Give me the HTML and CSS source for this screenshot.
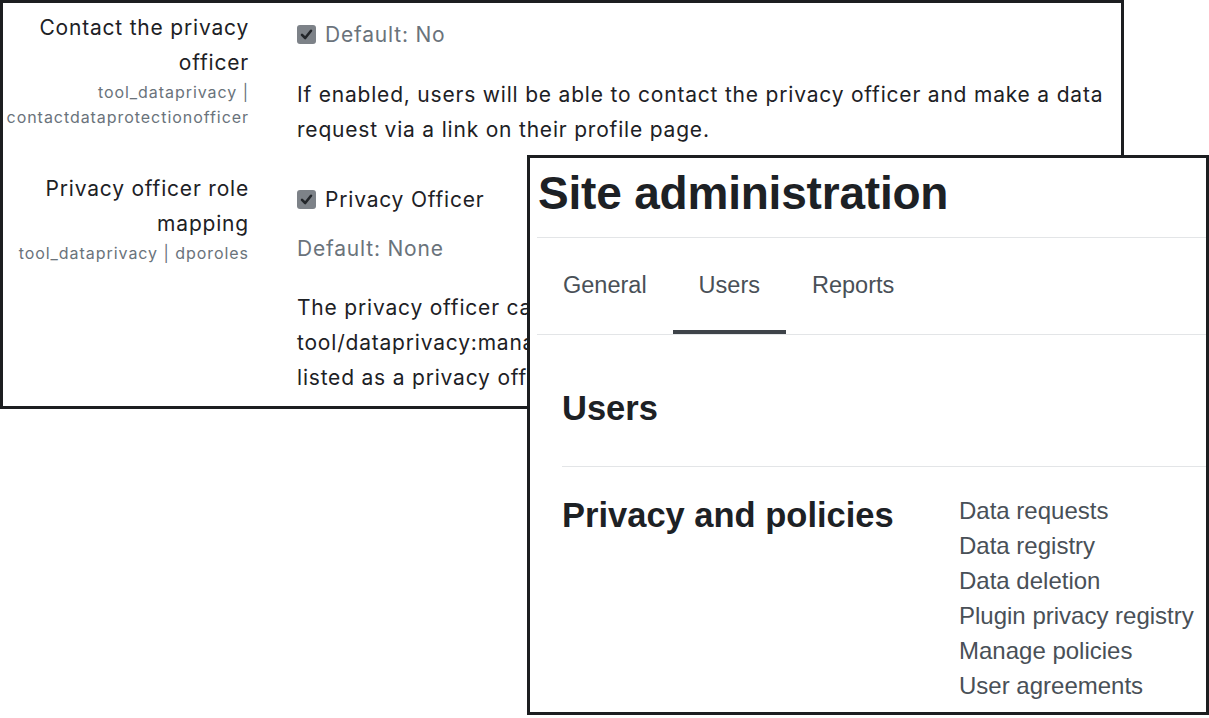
FILE: index.html
```html
<!DOCTYPE html>
<html lang="en">
<head>
<meta charset="utf-8">
<title>Privacy settings</title>
<link rel="stylesheet" href="styles.css">
</head>
<body>
<div class="desk">
  <section class="win win-settings">
    <div class="setting">
      <div class="setting-label">
        <div class="setting-name">Contact the privacy officer</div>
        <div class="setting-key">tool_dataprivacy | contactdataprotectionofficer</div>
      </div>
      <div class="setting-body">
        <div class="check-line check-line-first">
          <span class="checkbox"><svg viewBox="0 0 19 19" width="19" height="19"><path d="M5 9.8 L8.2 13 L14 5.8" fill="none" stroke="#23262a" stroke-width="2.6" stroke-linecap="round" stroke-linejoin="round"/></svg></span>
          <span class="muted">Default: No</span>
        </div>
        <p class="desc">If enabled, users will be able to contact the privacy officer and make a data request via a link on their profile page.</p>
      </div>
    </div>
    <div class="setting">
      <div class="setting-label">
        <div class="setting-name">Privacy officer role mapping</div>
        <div class="setting-key">tool_dataprivacy | dporoles</div>
      </div>
      <div class="setting-body">
        <div class="check-line check-line-list">
          <span class="checkbox"><svg viewBox="0 0 19 19" width="19" height="19"><path d="M5 9.8 L8.2 13 L14 5.8" fill="none" stroke="#23262a" stroke-width="2.6" stroke-linecap="round" stroke-linejoin="round"/></svg></span>
          <span class="dark">Privacy Officer</span>
        </div>
        <div class="muted default-line">Default: None</div>
        <p class="desc desc-second">The privacy officer can manage data requests. The capability tool/dataprivacy:managedatarequests must be allowed for a role to be listed as a privacy officer role mapping option.</p>
      </div>
    </div>
  </section>

  <section class="win win-admin">
    <header class="admin-head">
      <h1 class="admin-title">Site administration</h1>
    </header>
    <nav class="tabs">
      <a class="tab">General</a>
      <a class="tab tab-active">Users</a>
      <a class="tab">Reports</a>
    </nav>
    <div class="admin-body">
      <div class="cat cat-first">
        <h2 class="cat-title">Users</h2>
      </div>
      <div class="cat cat-row">
        <h2 class="cat-title">Privacy and policies</h2>
        <ul class="cat-links">
          <li>Data requests</li>
          <li>Data registry</li>
          <li>Data deletion</li>
          <li>Plugin privacy registry</li>
          <li>Manage policies</li>
          <li>User agreements</li>
        </ul>
      </div>
    </div>
  </section>
</div>
</body>
</html>
```
FILE: styles.css
```css
html, body {
  margin: 0;
  padding: 0;
  background: #ffffff;
}

.desk {
  position: relative;
  width: 1209px;
  height: 718px;
  overflow: hidden;
  background: #ffffff;
}

.win {
  position: absolute;
  box-sizing: border-box;
  background: #ffffff;
  border: 3px solid #1c1e20;
  overflow: hidden;
}

/* ---------- settings window ---------- */
.win-settings {
  left: 0;
  top: 0;
  width: 1124px;
  height: 409px;
  padding-top: 7px;
  font-family: "Inter", "Liberation Sans", sans-serif;
  color: #1d2125;
}

.setting {
  display: grid;
  grid-template-columns: 246px 1fr;
  column-gap: 48px;
  margin-bottom: 24px;
}

.setting-label {
  text-align: right;
}

.setting-name {
  font-size: 21px;
  line-height: 35px;
  letter-spacing: 0.8px;
  color: #1d2125;
}

.setting-key {
  font-size: 16px;
  line-height: 25px;
  letter-spacing: 0.95px;
  color: #6a737b;
}

.setting-body {
  font-size: 21px;
  line-height: 35px;
  letter-spacing: 0.8px;
  padding-right: 8px;
}

.check-line {
  display: flex;
  align-items: center;
  gap: 9px;
}

.check-line-first {
  padding-top: 7px;
}

.check-line-list {
  padding-top: 11px;
}

.checkbox {
  display: inline-flex;
  flex: none;
  width: 19px;
  height: 19px;
  border-radius: 3px;
  background: #7d8288;
}

.checkbox svg {
  display: block;
}

.muted {
  color: #6a737b;
}

.dark {
  color: #1d2125;
}

.default-line {
  margin-top: 14px;
}

.desc {
  margin: 25px 0 0;
}

.desc-second {
  margin-top: 24px;
  max-width: 770px;
}

/* ---------- admin window ---------- */
.win-admin {
  left: 527px;
  top: 155px;
  width: 682px;
  height: 560px;
  font-family: "Liberation Sans", Arial, sans-serif;
  color: #1d2125;
}

.admin-head {
  margin-left: 7px;
  padding: 8px 0 16px 1px;
  border-bottom: 1px solid #e3e5e7;
}

.admin-title {
  margin: 0;
  font-size: 46px;
  line-height: 55px;
  font-weight: 700;
  color: #1d2125;
  letter-spacing: -0.2px;
}

.tabs {
  display: flex;
  margin-left: 7px;
  border-bottom: 1px solid #e3e5e7;
}

.tab {
  padding: 33px 26px 31px;
  font-size: 23.5px;
  line-height: 28px;
  color: #495057;
  border-bottom: 4px solid transparent;
}

.tab-active {
  border-bottom-color: #3e4349;
}

.admin-body {
  padding-left: 32px;
}

.cat {
  border-bottom: 1px solid #e3e5e7;
}

.cat-first {
  padding: 53px 0 38px;
}

.cat-row {
  display: grid;
  grid-template-columns: 397px 1fr;
  padding-top: 28px;
  border-bottom: none;
}

.cat-title {
  margin: 0;
  font-size: 34.5px;
  line-height: 40px;
  font-weight: 700;
  color: #1d2125;
}

.cat-links {
  list-style: none;
  margin: -2px 0 0;
  padding: 0;
  font-size: 24px;
  line-height: 35px;
  color: #495057;
}
```
